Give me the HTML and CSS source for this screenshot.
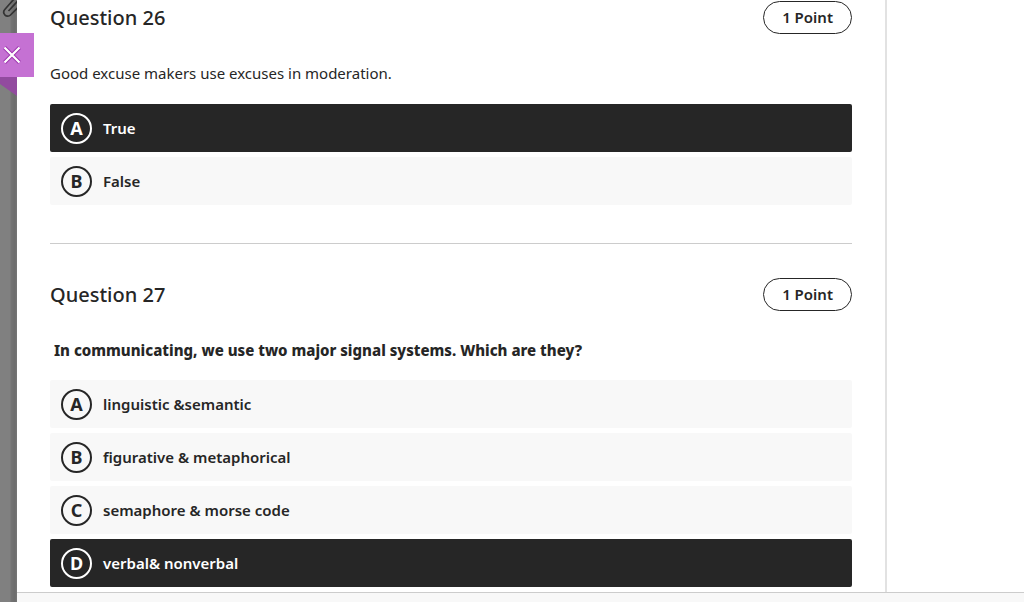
FILE: index.html
```html
<!DOCTYPE html>
<html lang="en">
<head>
<meta charset="utf-8">
<meta name="viewport" content="width=device-width, initial-scale=1">
<title>Test</title>
<link rel="stylesheet" href="styles.css">
</head>
<body>
<div class="app">
  <aside class="backdrop">
    <svg class="backdrop-icon" viewBox="0 0 17 20" aria-hidden="true">
      <path d="M14 -1L4.800 9.500C3.500 11 3.500 13.300 4.800 14.800C6.500 16.600 9 16.600 10.500 15L19 6.500M19 -0.500L8.500 11" fill="none" stroke="#333" stroke-width="1.700"/>
    </svg>
    <button class="close" type="button" aria-label="Close">
      <svg class="close-icon" viewBox="0 0 20 20" aria-hidden="true">
        <path d="M2.500 2.500L17.500 17.500M17.500 2.500L2.500 17.500" stroke="#9c33ae" stroke-width="4"/>
        <path d="M2.500 2.500L17.500 17.500M17.500 2.500L2.500 17.500" stroke="#fff" stroke-width="2.200"/>
      </svg>
    </button>
    <svg class="fold" viewBox="0 0 17 19" aria-hidden="true"><path d="M0 0H17V19L0 7Z" fill="#924b9f"/></svg>
  </aside>
  <div class="panel">
    <div class="columns">
      <main class="questions">
        <section class="question">
          <header class="question-head">
            <h2 class="question-title">Question 26</h2>
            <span class="points">1 Point</span>
          </header>
          <p class="prompt" id="p26">Good excuse makers use excuses in moderation.</p>
          <div class="options" role="radiogroup" aria-labelledby="p26">
            <label class="option"><input class="ring" type="radio" name="q26" checked><span class="letter">A</span><span class="answer">True</span></label>
            <label class="option"><input class="ring" type="radio" name="q26"><span class="letter">B</span><span class="answer">False</span></label>
          </div>
        </section>
        <section class="question">
          <header class="question-head">
            <h2 class="question-title">Question 27</h2>
            <span class="points">1 Point</span>
          </header>
          <p class="prompt prompt-bold" id="p27">&nbsp;In communicating, we use two major signal systems. Which are they?</p>
          <div class="options" role="radiogroup" aria-labelledby="p27">
            <label class="option"><input class="ring" type="radio" name="q27"><span class="letter">A</span><span class="answer">linguistic &amp;semantic</span></label>
            <label class="option"><input class="ring" type="radio" name="q27"><span class="letter">B</span><span class="answer">figurative &amp; metaphorical</span></label>
            <label class="option"><input class="ring" type="radio" name="q27"><span class="letter">C</span><span class="answer">semaphore &amp; morse code</span></label>
            <label class="option"><input class="ring" type="radio" name="q27" checked><span class="letter">D</span><span class="answer">verbal&amp; nonverbal</span></label>
          </div>
        </section>
      </main>
      <aside class="details"></aside>
    </div>
    <footer class="footer"></footer>
  </div>
</div>
</body>
</html>
```
FILE: styles.css
```css
* { box-sizing: border-box; }

body {
  margin: 0;
  background: #fff;
  color: #262626;
  font-family: "Noto Sans", "Open Sans", sans-serif;
  font-size: 15px;
  line-height: 23px;
}

.app { display: flex; min-height: 100vh; }

.backdrop {
  position: relative;
  flex: 0 0 17px;
  background: linear-gradient(to right, #808080 10px, #747474 11px, #6c6c6c 15px, #777 17px);
}

.backdrop-icon { display: block; width: 17px; height: 20px; }

.close {
  position: absolute;
  top: 33px;
  left: 0;
  display: flex;
  align-items: center;
  width: 34px;
  height: 44px;
  padding: 0 2px;
  border: 0;
  background: #c571d3;
  cursor: pointer;
}

.close-icon { width: 20px; height: 20px; }

.fold { position: absolute; top: 77px; left: 0; width: 17px; height: 19px; }

.panel { display: flex; flex: 1; flex-direction: column; min-width: 0; }

.columns { display: flex; flex: 1; }

.questions { flex: 1; padding: 1px 33px 4px; border-right: 2px solid #e2e2e2; }

.details { flex: 0 0 137px; }

.footer { height: 10px; border-top: 1px solid #ccc; background: #f8f8f8; }

.question + .question {
  margin-top: 38px;
  padding-top: 34px;
  border-top: 1px solid #ccc;
}

.question-head { display: flex; align-items: center; justify-content: space-between; }

.question-title { margin: 0; font-size: 20px; font-weight: 500; line-height: 33px; }

.points {
  padding: 4px 18px;
  border: 1px solid #262626;
  border-radius: 17px;
  font-weight: 600;
}

.prompt { margin: 28px 0 19px; }

.prompt-bold { margin-bottom: 18px; font-weight: 800; }

.options { display: grid; gap: 5px; }

.option {
  display: grid;
  grid-template-columns: 31px 1fr;
  column-gap: 11px;
  align-items: center;
  height: 48px;
  padding: 0 11px;
  border-radius: 2px;
  background: #f8f8f8;
  font-weight: 600;
  cursor: pointer;
}

.option:has(.ring:checked) { background: #262626; color: #fff; }

.ring {
  grid-area: 1 / 1;
  width: 31px;
  height: 31px;
  margin: 0;
  border: 2px solid currentColor;
  border-radius: 50%;
  appearance: none;
  color: inherit;
}

.letter { grid-area: 1 / 1; font-size: 18px; font-weight: 700; text-align: center; }

.answer { grid-area: 1 / 2; }
```
